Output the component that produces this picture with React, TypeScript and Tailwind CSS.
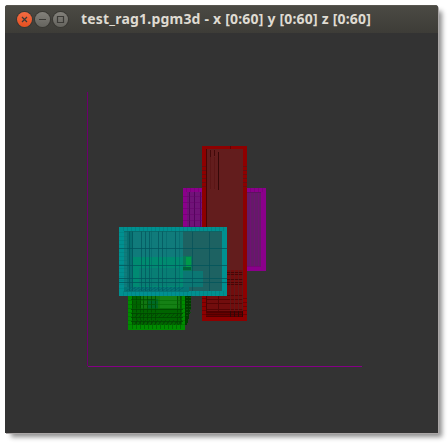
import type { ReactNode } from 'react';

const range = (start: number, end: number, step: number): number[] => {
  const out: number[] = [];
  for (let v = start; v <= end; v += step) out.push(v);
  return out;
};

type GridProps = { xs?: number[]; ys?: number[]; x1?: number; x2?: number; y1?: number; y2?: number; color: string; opacity?: number };

function Grid({ xs = [], ys = [], x1 = 0, x2 = 0, y1 = 0, y2 = 0, color, opacity = 1 }: GridProps) {
  return (
    <g fill={color} opacity={opacity}>
      {xs.map((x) => <rect key={`x${x}`} x={x} y={y1} width={1} height={y2 - y1} />)}
      {ys.map((y) => <rect key={`y${y}`} x={x1} y={y} width={x2 - x1} height={1} />)}
    </g>
  );
}

function MagentaBox() {
  return (
    <g>
      <rect x={183} y={188} width={83} height={83} fill="#8b008b" />
      <rect x={187} y={192} width={74} height={75} fill="#701378" />
      <rect x={247} y={192} width={14} height={75} fill="#641b68" />
      <Grid xs={[189, 194, 200]} y1={192} y2={228} color="#480052" opacity={0.7} />
      <Grid xs={[250, 254, 258]} y1={192} y2={267} color="#701074" />
      <Grid ys={range(196, 228, 6)} x1={183} x2={202} color="#650069" opacity={0.45} />
      <Grid xs={range(186, 264, 4)} y1={188} y2={192} color="#6c006c" opacity={0.4} />
      <rect x={247} y={192} width={14} height={1} fill="#5c125f" />
      <rect x={247} y={266} width={14} height={1} fill="#780578" />
    </g>
  );
}

function RedBox() {
  return (
    <g>
      <rect x={202} y={146} width={45} height={175} fill="#8e0000" />
      <rect x={206} y={149} width={37} height={166} fill="#631d1d" />
      <rect x={206} y={270} width={37} height={45} fill="#720d0d" />
      <rect x={206} y={149} width={1} height={166} fill="#490505" />
      <rect x={210} y={150} width={1} height={7} fill="#420909" />
      <rect x={214} y={150} width={1} height={6} fill="#420909" />
      <rect x={218} y={152} width={1} height={38} fill="#350808" />
      <Grid xs={[210, 214]} y1={157} y2={189} color="#5b1616" />
      <Grid ys={range(166, 189, 4)} x1={202} x2={206} color="#601010" opacity={0.8} />
      <Grid ys={range(166, 189, 4)} x1={243} x2={247} color="#601010" opacity={0.8} />
      <Grid ys={[272, 274, 279, 282, 284]} x1={206} x2={243} color="#430303" opacity={0.85} />
      <Grid ys={[295, 299, 303, 309]} x1={206} x2={243} color="#500303" opacity={0.8} />
      <Grid xs={[230, 234, 238, 242]} y1={270} y2={315} color="#572020" opacity={0.7} />
      <rect x={218} y={295} width={1} height={16} fill="#520606" />
      <rect x={206} y={311} width={37} height={6} fill="#500000" />
      <Grid ys={[313, 315]} x1={206} x2={243} color="#690000" />
      <Grid ys={range(298, 316, 4)} x1={202} x2={206} color="#4b0000" opacity={0.45} />
      <Grid ys={range(298, 316, 4)} x1={243} x2={247} color="#4b0000" opacity={0.45} />
      <rect x={230} y={146} width={1} height={3} fill="#650000" />
      <Grid xs={[230, 234, 238, 242]} y1={311} y2={317} color="#300707" />
    </g>
  );
}

function GreenBox() {
  return (
    <g>
      <path d="M185 255H191V308L187 325H185Z" fill="#003c00" />
      {range(257, 316, 3).map((y) => (
        <path key={y} d={`M186 ${y + 2}l2-1m1-2l2-1`} stroke="#0a520a" strokeWidth={1} />
      ))}
      <rect x={128} y={256} width={57} height={74} fill="#008b00" />
      <rect x={132} y={260} width={50} height={65} fill="#006400" />
      <rect x={141} y={296} width={40} height={13} fill="#117711" />
      <rect x={148} y={299} width={10} height={10} fill="#006a28" />
      <rect x={160} y={296} width={17} height={12} fill="#158115" />
      <Grid xs={[132, 136, 140, 143, 147, 151, 155, 177, 180]} y1={296} y2={325} color="#004500" opacity={0.7} />
      <Grid ys={[309, 313, 317, 321]} x1={131} x2={183} color="#004500" opacity={0.8} />
      <Grid ys={[299, 304]} x1={131} x2={155} color="#004500" opacity={0.6} />
      <Grid xs={range(132, 182, 4)} y1={325} y2={329} color="#005e00" opacity={0.7} />
      <Grid ys={range(300, 324, 4)} x1={128} x2={185} color="#006700" opacity={0.5} />
      {range(134, 178, 4).map((x) => (
        <path key={x} d={`M${x} 325l4-5m-3-3l4-4`} stroke="#063e06" strokeWidth={1} opacity={0.6} />
      ))}
    </g>
  );
}

function CyanBox() {
  return (
    <g>
      <rect x={119} y={227} width={108} height={69} fill="#009090" />
      <rect x={124} y={231} width={98} height={60} fill="#107b7b" />
      <rect x={183} y={231} width={39} height={60} fill="#1d6262" />
      <rect x={127} y={231} width={6} height={60} fill="#076f70" />
      <rect x={133} y={257} width={50} height={34} fill="#0b7c76" />
      <rect x={133} y={257} width={56} height={8} fill="#008b70" />
      <rect x={133} y={265} width={53} height={23} fill="#008a72" />
      <rect x={139} y={268} width={40} height={18} fill="#087e74" />
      <rect x={183} y={256} width={9} height={15} fill="#087858" />
      <rect x={186} y={257} width={5} height={10} fill="#009a49" />
      <rect x={183} y={267} width={8} height={3} fill="#006539" />
      <rect x={183} y={271} width={20} height={16} fill="#0b7773" />
      <rect x={124} y={287} width={65} height={5} fill="#067575" />
      <Grid xs={[129, 132, 141, 145, 149, 158, 162, 175, 192, 209]} y1={231} y2={291} color="#004e57" opacity={0.6} />
      <Grid xs={[151, 166, 179]} y1={231} y2={291} color="#005d64" opacity={0.4} />
      <Grid ys={[248, 265, 278, 282]} x1={119} x2={227} color="#00545b" opacity={0.75} />
      <Grid xs={range(123, 223, 4)} y1={227} y2={231} color="#007373" opacity={0.4} />
      <Grid xs={range(123, 223, 4)} y1={291} y2={296} color="#007373" opacity={0.4} />
      <Grid ys={range(232, 291, 4)} x1={119} x2={127} color="#007777" opacity={0.35} />
      {range(126, 178, 4).map((x) => (
        <path key={x} d={`M${x} 291l6-4`} stroke="#006169" strokeWidth={1} opacity={0.5} />
      ))}
      <rect x={124} y={231} width={98} height={1} fill="#0a6464" opacity={0.7} />
    </g>
  );
}

function Control({ className, children }: { className: string; children: ReactNode }) {
  return (
    <button className={`flex h-[15px] w-[15px] items-center justify-center rounded-full shadow-[0_0_0_1px_#393833] ${className}`}>
      <svg width="9" height="9" viewBox="0 0 9 9" fill="none" stroke="#3b3a36" strokeWidth="1.2">{children}</svg>
    </button>
  );
}

export default function App() {
  return (
    <main className="h-[443px] w-[448px] overflow-hidden bg-white pl-[5px] pt-[5px]">
      <section className="h-[428px] w-[433px] overflow-hidden rounded-t-[3px] bg-[#333333] shadow-[1px_1px_0_0_#aaa6a6,5px_5px_5px_-1px_rgba(0,0,0,0.45)]">
        <header className="flex h-7 items-center border-t border-[#58564f] bg-gradient-to-b from-[#4b4a44] to-[#3d3c37] pl-3">
          <div className="flex gap-[3px]">
            <Control className="bg-gradient-to-b from-[#f36b42] to-[#e6501f]"><path d="m2 2 5 5m0-5-5 5" /></Control>
            <Control className="bg-gradient-to-b from-[#83817b] to-[#65645e]"><path d="M1 4.5h7" /></Control>
            <Control className="bg-gradient-to-b from-[#83817b] to-[#65645e]"><path d="M1.5 1.5h6v6h-6z" /></Control>
          </div>
          <h1 className="-mt-0.5 ml-[13px] whitespace-nowrap font-['Noto_Sans',sans-serif] text-[14px] leading-5 font-bold tracking-[0.2px] text-[#dfdbd2]">
            test_rag1.pgm3d - x [0:60] y [0:60] z [0:60]
          </h1>
        </header>
        <svg className="block" width="434" height="401" viewBox="5 33 434 401" shapeRendering="crispEdges">
          <rect x={87} y={92} width={1} height={274} fill="#6c006c" />
          <rect x={88} y={366} width={274} height={1} fill="#850085" />
          <MagentaBox />
          <RedBox />
          <GreenBox />
          <CyanBox />
        </svg>
      </section>
    </main>
  );
}
